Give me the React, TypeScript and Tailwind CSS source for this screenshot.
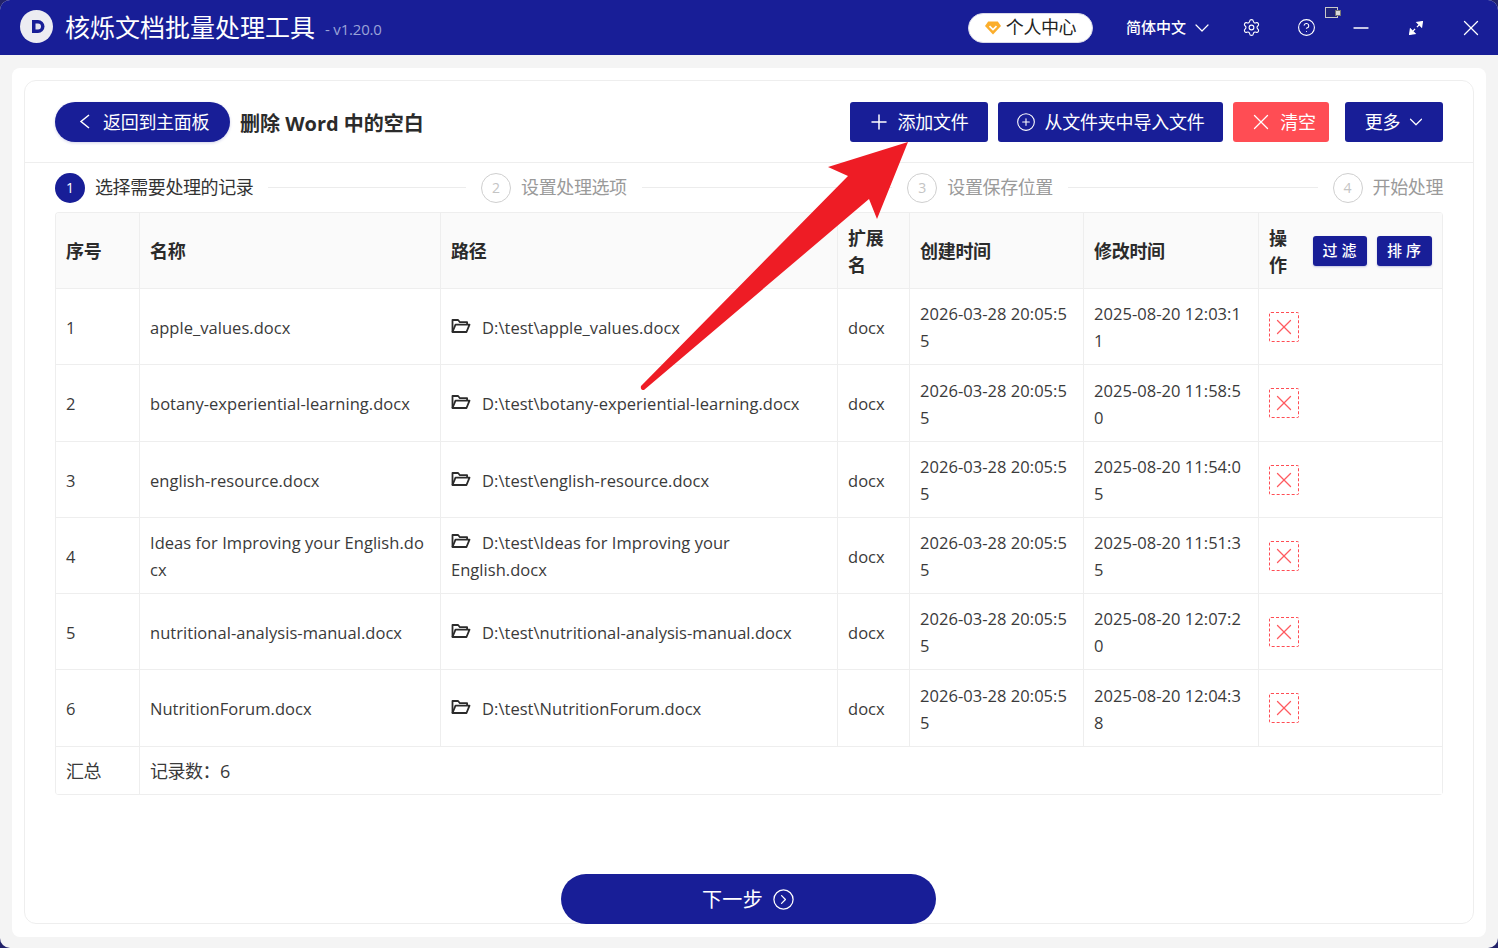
import React from "react";
import { ChevronDown, Settings, CircleHelp, Minus, X, Plus, CirclePlus, CircleChevronRight } from "lucide-react";

const font = "[font-family:'Open_Sans','Noto_Sans_CJK_SC',sans-serif]";

const rows = [
  { n: "1", name: "apple_values.docx", path: "D:\\test\\apple_values.docx", c: "2026-03-28 20:05:55", m: "2025-08-20 12:03:11", h: "h-[76px]" },
  { n: "2", name: "botany-experiential-learning.docx", path: "D:\\test\\botany-experiential-learning.docx", c: "2026-03-28 20:05:55", m: "2025-08-20 11:58:50", h: "h-[77px]" },
  { n: "3", name: "english-resource.docx", path: "D:\\test\\english-resource.docx", c: "2026-03-28 20:05:55", m: "2025-08-20 11:54:05", h: "h-[76px]" },
  { n: "4", name: "Ideas for Improving your English.docx", path: "D:\\test\\Ideas for Improving your English.docx", c: "2026-03-28 20:05:55", m: "2025-08-20 11:51:35", h: "h-[76px]" },
  { n: "5", name: "nutritional-analysis-manual.docx", path: "D:\\test\\nutritional-analysis-manual.docx", c: "2026-03-28 20:05:55", m: "2025-08-20 12:07:20", h: "h-[76px]" },
  { n: "6", name: "NutritionForum.docx", path: "D:\\test\\NutritionForum.docx", c: "2026-03-28 20:05:55", m: "2025-08-20 12:04:38", h: "h-[77px]" },
];

function FolderIcon() {
  return (
    <svg width="20" height="16" viewBox="0 0 20 16" fill="none" stroke="#2b2b2b" strokeWidth="1.8" strokeLinejoin="round" className="inline-block align-[0px] mr-[11px]">
      <path d="M1.5 14V2h5.6l1.8 2.2h7.2v2.4" />
      <path d="M1.5 14l3-7.4h14l-3 7.4z" />
    </svg>
  );
}

function Step({ n, label, active }: { n: string; label: string; active?: boolean }) {
  return (
    <div className="flex items-center shrink-0">
      <div className={active ? "w-[30px] h-[30px] rounded-full bg-[#181e97] text-white text-[14px] flex items-center justify-center" : "w-[30px] h-[30px] rounded-full border border-[#cfcfcf] text-[#c4c4c4] text-[14px] flex items-center justify-center"}>{n}</div>
      <span className={active ? "ml-[10px] text-[18px] tracking-[-0.4px] text-[#333]" : "ml-[10px] text-[18px] tracking-[-0.4px] text-[#9a9a9a]"}>{label}</span>
    </div>
  );
}

const base = "border-r border-b border-[#eeeeee] pl-[10px] pr-[11px] align-middle";
const td = `${base} break-all`;
const tdText = `${td} pt-[1px]`;
const tdPath = `${base} pt-[1px] [overflow-wrap:anywhere]`;
const th = `${base} pt-[2px] text-left font-bold text-[#2b2b2b] text-[18px] tracking-[-0.3px] bg-[#fafafa]`;

export default function App() {
  return (
    <div className="relative w-[1498px] h-[948px] overflow-hidden bg-[#22226a]">
      <div className={`${font} w-full h-full rounded-[10px] overflow-hidden bg-[#f4f4f4] flex flex-col`}>
        <header className="relative h-[55px] shrink-0 bg-[#181e97] flex items-center pl-[20px] text-white">
          <svg width="33" height="33" viewBox="0 0 33 33" className="shrink-0 -mt-[2px]">
            <circle cx="16.5" cy="16.5" r="16.5" fill="#ececf2" />
            <path d="M12 10h6a6.5 6.5 0 0 1 0 13h-6z" fill="#181e97" />
            <path d="M15.5 13.5h2.5a3 3 0 0 1 0 6h-2.5z" fill="#e4e4f0" />
          </svg>
          <span className="ml-[12px] text-[25px]">核烁文档批量处理工具</span>
          <span className="ml-[10px] mt-[4px] text-[15px] tracking-[-0.2px] text-[#9aa3d8]">- v1.20.0</span>
          <div className="ml-auto flex items-center">
            <div className="w-[125px] h-[30px] rounded-full bg-white border border-[#d8d8e8] flex items-center justify-center text-[#222] text-[18px] tracking-[-0.4px]">
              <svg width="16" height="14" viewBox="0 0 16 14" className="mr-[5px]">
                <path d="M3.2 0.5h9.6L16 5l-8 8.5L0 5z" fill="#fbae2c" />
                <path d="M4.5 5.2L8 8.6l3.5-3.4" fill="none" stroke="#fff" strokeWidth="1.7" />
              </svg>
              个人中心
            </div>
            <span className="ml-[33px] text-[15px] font-medium">简体中文</span>
            <ChevronDown size={24} strokeWidth={1.2} className="ml-[4px] mr-[9px]" />
            <div className="w-[55px] flex justify-center"><Settings size={19} strokeWidth={1.4} className="ml-px" /></div>
            <div className="w-[55px] flex justify-center"><CircleHelp size={19} strokeWidth={1.4} className="ml-px" /></div>
            <div className="w-[55px] flex justify-center"><Minus size={24} strokeWidth={1.3} /></div>
            <div className="w-[55px] flex justify-center">
              <svg width="14" height="14" viewBox="0 0 14 14" fill="#fff" stroke="#fff" strokeWidth="1.2">
                <path d="M13.4 0.6L8 1.4l4.6 4.6z" />
                <path d="M0.6 13.4L6 12.6L1.4 8z" />
                <path d="M10 4L7.9 6.1M4 10l2.1-2.1" fill="none" />
              </svg>
            </div>
            <div className="w-[55px] flex justify-center"><X size={26} strokeWidth={1.2} /></div>
          </div>
          <div className="absolute left-[1325px] top-[7px] w-[13px] h-[11px] bg-[#20247a] border border-[#c9c9c9]">
            <div className="absolute -right-[4px] bottom-[1px] w-[6px] h-[6px] bg-[#d9d9d9] border border-[#777]" />
          </div>
        </header>

        <main className="flex-1 mt-[13px] mb-[11px] mx-[12px] bg-white rounded-[8px] pt-[12px] px-[12px] pb-[13px]">
          <section className="h-full border border-[#eeeeee] rounded-[12px] flex flex-col">
            <div className="h-[82px] shrink-0 border-b border-[#eeeeee] flex items-center px-[30px]">
              <button className="w-[175px] h-[40px] rounded-full bg-[#181e97] text-white flex items-center text-[18px] tracking-[-0.3px] pl-[24px] pt-[2px] shadow-[0_1px_3px_rgba(24,30,151,0.2)]">
                <svg width="11" height="15" viewBox="0 0 11 15" fill="none" stroke="#fff" strokeWidth="1.5" className="mr-[13px] -mt-[2px] shrink-0">
                  <path d="M10 1L2 7.5L10 14" />
                </svg>
                返回到主面板
              </button>
              <span className="ml-[10px] pt-[4px] text-[20px] font-bold text-[#2b2b2b]">删除 Word 中的空白</span>
              <div className="ml-auto flex items-center text-white text-[18px] tracking-[-0.2px]">
                <button className="w-[138px] h-[40px] rounded-[3px] bg-[#181e97] flex items-center justify-center pt-[1px]">
                  <Plus size={24} strokeWidth={1.5} className="mr-[6px] -ml-[2px]" />添加文件
                </button>
                <button className="ml-[10px] w-[225px] h-[40px] rounded-[3px] bg-[#181e97] flex items-center justify-center pt-[1px]">
                  <CirclePlus size={20} strokeWidth={1.3} className="mr-[8px]" />从文件夹中导入文件
                </button>
                <button className="ml-[10px] w-[96px] h-[40px] rounded-[3px] bg-[#ff4d54] flex items-center justify-center pt-[1px] pl-[4px]">
                  <X size={26} strokeWidth={1.2} className="mr-[6px] -ml-[2px]" />清空
                </button>
                <button className="ml-[16px] w-[98px] h-[40px] rounded-[3px] bg-[#181e97] flex items-center justify-center pt-[1px] pl-[4px]">
                  更多<ChevronDown size={22} strokeWidth={1.3} className="ml-[5px]" />
                </button>
              </div>
            </div>

            <div className="h-[49px] shrink-0 flex items-center px-[30px]">
              <Step n="1" label="选择需要处理的记录" active />
              <div className="grow-[198] basis-0 h-px bg-[#ececec] mx-[15px]" />
              <Step n="2" label="设置处理选项" />
              <div className="grow-[251] basis-0 h-px bg-[#ececec] mx-[15px]" />
              <Step n="3" label="设置保存位置" />
              <div className="grow-[250] basis-0 h-px bg-[#ececec] mx-[15px]" />
              <Step n="4" label="开始处理" />
            </div>

            <div className="mx-[30px] border-l border-t border-[#eeeeee] rounded-[4px] overflow-hidden">
              <table className="w-[1387px] table-fixed border-separate border-spacing-0 text-[16.5px] tracking-[0.04px] leading-[27px] text-[#3a3a3a]">
                <colgroup>
                  <col className="w-[84px]" />
                  <col className="w-[301px]" />
                  <col className="w-[397px]" />
                  <col className="w-[72px]" />
                  <col className="w-[174px]" />
                  <col className="w-[175px]" />
                  <col />
                </colgroup>
                <thead>
                  <tr className="h-[76px]">
                    <th className={th}>序号</th>
                    <th className={th}>名称</th>
                    <th className={th}>路径</th>
                    <th className={th}>扩展名</th>
                    <th className={th}>创建时间</th>
                    <th className={th}>修改时间</th>
                    <th className={th}>
                      <div className="flex items-center">
                        <span className="w-[20px]">操作</span>
                        <div className="ml-auto -mr-px -mt-[2px] flex gap-[10px]">
                          <button className="w-[54px] h-[30px] pl-[3px] rounded-[3px] bg-[#181e97] text-white text-[15px] font-medium tracking-[4px] shadow-[0_1px_2px_rgba(24,30,151,0.25)]">过滤</button>
                          <button className="w-[55px] h-[30px] pl-[3px] rounded-[3px] bg-[#181e97] text-white text-[15px] font-medium tracking-[4px] shadow-[0_1px_2px_rgba(24,30,151,0.25)]">排序</button>
                        </div>
                      </div>
                    </th>
                  </tr>
                </thead>
                <tbody>
                  {rows.map((r) => (
                    <tr key={r.n} className={r.h}>
                      <td className={tdText}>{r.n}</td>
                      <td className={tdText}>{r.name}</td>
                      <td className={tdPath}><FolderIcon />{r.path}</td>
                      <td className={tdText}>docx</td>
                      <td className={tdText}>{r.c}</td>
                      <td className={tdText}>{r.m}</td>
                      <td className={td}>
                        <div className="w-[30px] h-[30px] border border-dashed border-[#ff4d54] rounded-[2px] flex items-center justify-center">
                          <X size={26} strokeWidth={1.2} className="text-[#ff5a60]" />
                        </div>
                      </td>
                    </tr>
                  ))}
                  <tr className="h-[48px] text-[18px] tracking-[-0.5px]">
                    <td className={`${td} pt-[2px]`}>汇总</td>
                    <td className={`${td} pt-[2px]`} colSpan={6}>记录数：6</td>
                  </tr>
                </tbody>
              </table>
            </div>

            <div className="flex-1 flex items-end justify-center">
              <button className="-mb-px mr-px w-[375px] h-[50px] rounded-full bg-[#181e97] text-white text-[20px] tracking-[0.3px] pt-[2px] flex items-center justify-center">
                下一步
                <CircleChevronRight size={23} strokeWidth={1.3} className="ml-[9px] -mt-[1px]" />
              </button>
            </div>
          </section>
        </main>
      </div>

      <svg className="absolute left-0 top-0 pointer-events-none" width="1498" height="948" viewBox="0 0 1498 948">
        <path d="M908 142L828 167L848 176L641 386Q640 390 644 390L869 199L877 219Z" fill="#ee1c25" />
      </svg>
    </div>
  );
}
